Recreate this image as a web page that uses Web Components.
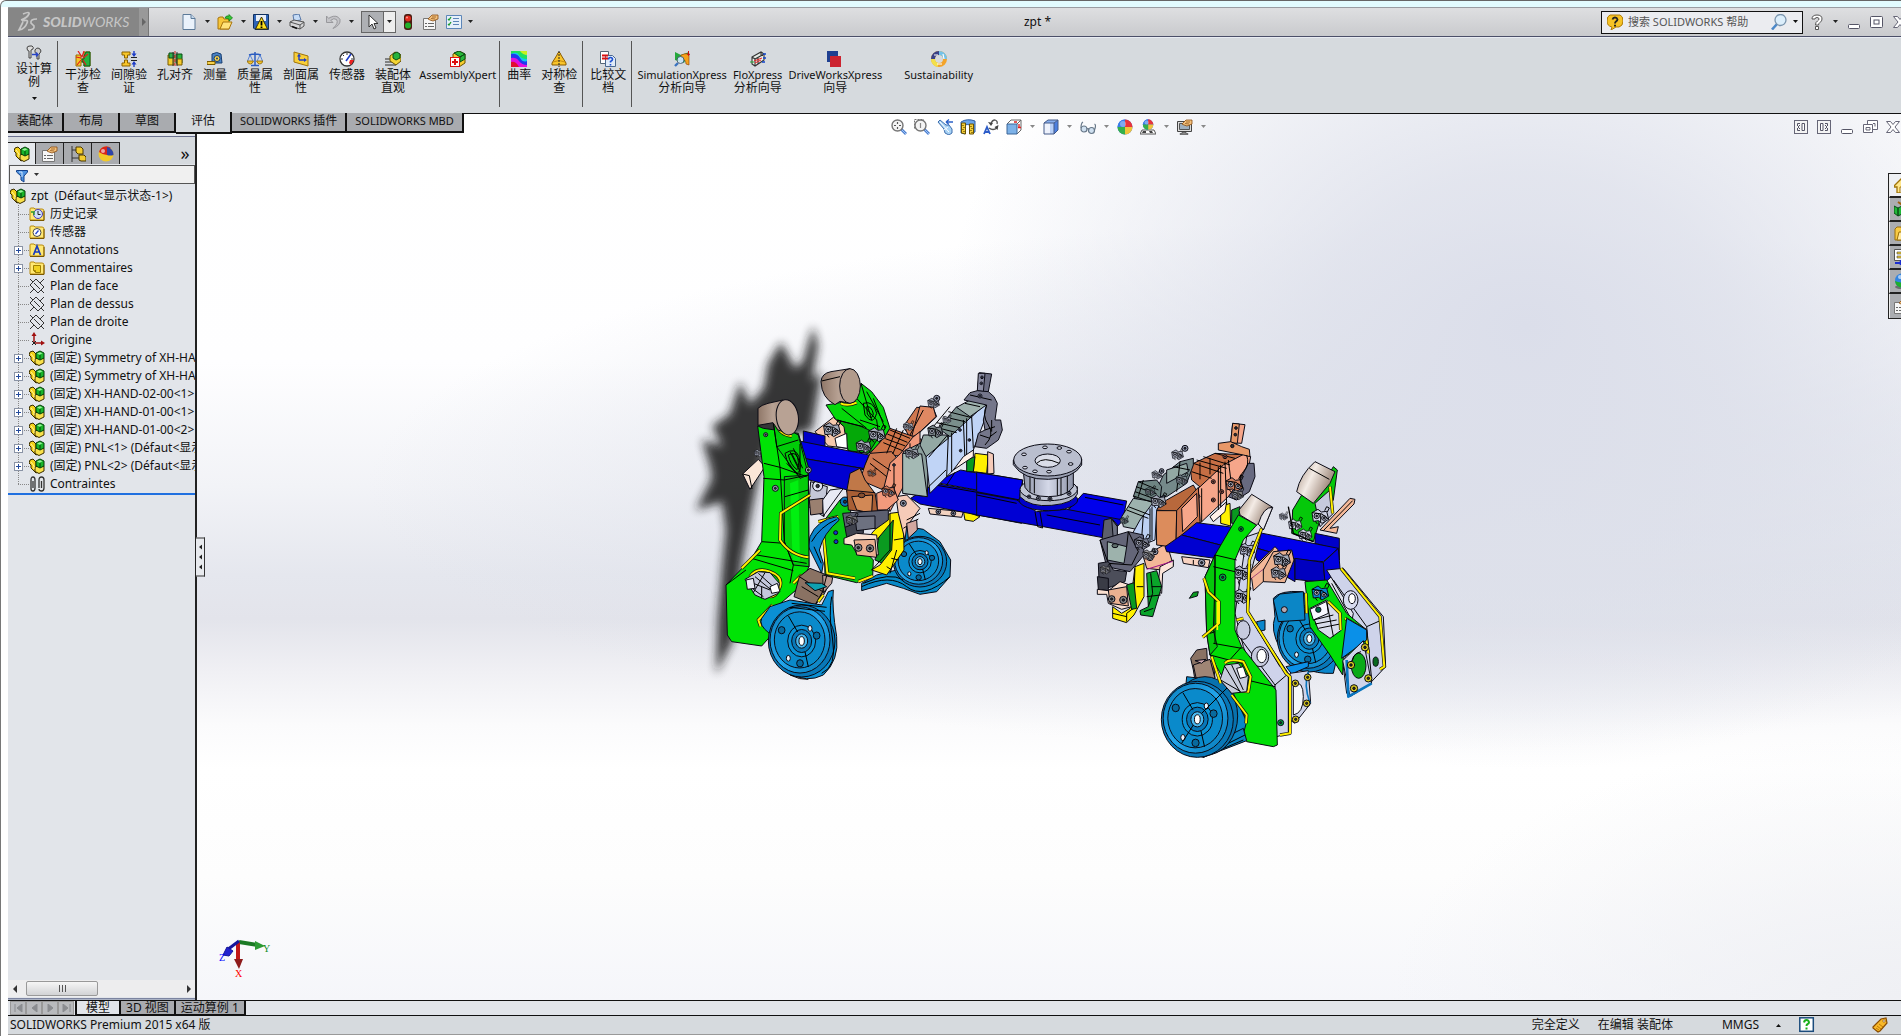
<!DOCTYPE html>
<html lang="zh-CN">
<head>
<meta charset="utf-8">
<title>zpt *</title>
<style>
  html, body { height: 100%; margin: 0; overflow: hidden; }
  body {
    font: 12px/16px "Noto Sans", "Noto Sans CJK SC", sans-serif;
    color: #111;
    background: #fff;
  }
</style>
</head>
<body>
<sw-app></sw-app>
<script>
const define = (name, css, html, setup) => {
  const tpl = document.createElement('template');
  tpl.innerHTML = `<style>
    :host,*{box-sizing:border-box}
    button{font:inherit;color:inherit;background:none;border:0;padding:0;margin:0;display:flex;align-items:center;justify-content:center}
    input{font:inherit;color:inherit;background:none;border:0;padding:0;margin:0;outline:0;min-width:0}
    .lat{font-size:11px}
    ${css}</style>${html}`;
  customElements.define(name, class extends HTMLElement {
    connectedCallback() {
      if (this.shadowRoot) return;
      this.attachShadow({ mode: 'open' }).append(tpl.content.cloneNode(true));
      if (setup) setup.call(this, this.shadowRoot);
    }
  });
};

/* ---------- icons, 16 x 16 ---------- */
const assembly = '<path d="M1 2l3-1 3 3v5l2 0v5l-2 1-5-5V7L0 5z" fill="#f4d21c" stroke="#3a2d00" stroke-width="1"/><path d="M6 9l3-1 6 0v5l-5 2.500-4-2z" fill="#f8e04a" stroke="#3a2d00" stroke-width="1"/><path d="M7 3l4-2 4 2v5l-4 2-4-2z" fill="#19b52a" stroke="#053d08"/><path d="M8 3.500l3-1.300L13.500 3.300l-3 1.500z" fill="#9cf09c"/><path d="M11 5v4.500" stroke="#053d08"/><path d="M2 4l3 4v3" stroke="#fff6a0"/>';
const folder = '<path d="M1 3q0-1 1-1h3l1 1h7q2 0 2 2v9H1z" fill="#ffe873" stroke="#b88a10"/><path d="M15 5v9.500H1" fill="none" stroke="#7a5800"/>';
const doc = '<path d="M2 .5h8l4 4v11H2z" fill="#eaf2fb" stroke="#5c7a99"/><path d="M10 .5v4h4" fill="#c5d8ec" stroke="#5c7a99"/>';
const ball = '<circle cx="8" cy="8" r="7.500" fill="#3b6fe0"/><path d="M8 8V.5a7.500 7.500 0 0 0-7.500 7.500z" fill="#3b7de8"/><path d="M8 8V.5A7.500 7.500 0 0 1 15.500 8z" fill="#e8343c"/><path d="M8 8h7.500A7.500 7.500 0 0 1 8 15.500z" fill="#f0c43c"/><path d="M8 8v7.500A7.500 7.500 0 0 1 .5 8z" fill="#35b04a"/><circle cx="6" cy="5" r="3" fill="#fff" opacity=".35"/>';
const hand = '<path d="M5 5l4-4h6v4l-5 2-3-1z" fill="#f2c07c" stroke="#8a4c10" stroke-width=".8"/><path d="M9 3l4 0M8 4.500l4 .5" stroke="#8a4c10" stroke-width=".7"/>';
const lens = '<path d="M10 10l5 5" stroke="#4d7fd0" stroke-width="2.800"/><path d="M10 10l5 5" stroke="#9cc3f5" stroke-width="1"/><circle cx="6.500" cy="6.500" r="5.500" fill="#f4f4f4" stroke="#777" stroke-width="1.400"/>';
const ICONS = {
  assembly,
  'new': doc,
  open: '<path d="M1 4l2-1h3l1 2h5v10H1z" fill="#f7c63a" stroke="#a8740c"/><path d="M3 15l3-7h9l-3 7z" fill="#ffe27a" stroke="#a8740c"/><path d="M8 4q1-3 4-2l0-1.500 3.500 3.500-3.500 3V5q-2-.5-4-1z" fill="#35c435" stroke="#0c750c" stroke-width=".7"/>',
  save: '<path d="M.5 .5h15v15H2l-1.500-1.500z" fill="#2e64b8" stroke="#10305f"/><path d="M3 1h10v6H3z" fill="#e8eef6"/><path d="M4 10h8v5H4z" fill="#a9b8cc"/><path d="M8.500 3l6 12h-12z" fill="#ffe21f" stroke="#3a3000"/><path d="M8.500 7v4.500M8.500 12.500v1.500" stroke="#000" stroke-width="1.800"/>',
  print: '<path d="M4 1l6-1 2 6-7 1z" fill="#c5dbf6" stroke="#5878a8"/><path d="M1 8l4-2 10 2v4l-4 3L1 12z" fill="#d6d6d8" stroke="#555"/><path d="M1 8l10 3 4-3M11 11v4" fill="none" stroke="#555"/><path d="M3 12.500l5 2" stroke="#111" stroke-width="1.500"/>',
  undo: '<path d="M1.500 2v6.500H8L5.800 6.300Q9 3.500 11.500 5.500 14 9 8 14.500 16 11 15 5.500 12 0 5 3.500L3.700 4.500z" fill="#c4c4c8" stroke="#98989c"/>',
  select: '<path d="M4 1v12l3-3 2 5 2-1-2-4.500h4z" fill="#fff" stroke="#333"/>',
  traffic: '<rect x="4" y="0" width="8" height="16" rx="3" fill="#4b1d12"/><circle cx="8" cy="4.500" r="3" fill="#e32b1e"/><circle cx="8" cy="11.500" r="3" fill="#22b02a"/><circle cx="7" cy="3.500" r="1" fill="#ff9c90"/>',
  props: '<path d="M.5 4.500h12v11H.5z" fill="#f6f6f6" stroke="#777"/><path d="M2 9.500h2M5 9.500h6M2 12.500h2M5 12.500h6" stroke="#666"/>' + hand,
  list: '<path d="M.5 1.500h15v13H.5z" fill="#e6f0fa" stroke="#5d86b8"/><path d="M2 5l1 1 2-3M2 10l1 1 2-3" stroke="#1b9a2c" fill="none" stroke-width="1.300"/><path d="M7 4.500h6M7 7.500h6M7 10.500h6" stroke="#5d86b8"/>',
  helpball: '<path d="M3 1h10q3 1 3 6t-4 6H9l-5 3 1-3Q0 12 0 7t3-6z" fill="#f6c325" stroke="#b07c08"/><path d="M5.500 5.500Q6 3.500 8 3.500t2.500 2q0 1-1.500 2-1 .8-1 2" fill="none" stroke="#222" stroke-width="1.800"/><path d="M8 10.800v1.800" stroke="#222" stroke-width="2"/>',
  search: '<path d="M6 10l-5 5.500" stroke="#4c88c8" stroke-width="2.600"/><circle cx="9.500" cy="6" r="5.500" fill="#dceefb" stroke="#7a94ad" stroke-width="1.300"/>',
  help: '<path d="M3 5Q3 1 8 1t5 4q0 2-2 3.500-1.500 1-1.500 2.500h-3q0-3 2-4Q10 6 10 5q0-1.500-2-1.500T6 5zM6.500 12.500h3v3h-3z" fill="#fff" stroke="#555"/>',
  min: '<rect x="2.500" y="10.500" width="11" height="4" rx="1" fill="#fff" stroke="#555566"/>',
  max: '<rect x="1.500" y="2.500" width="12" height="11" rx="1" fill="#fff" stroke="#555566"/><rect x="5" y="6" width="5" height="4" fill="#fff" stroke="#555566"/>',
  cascade: '<path d="M5.500 1.500h10v9h-10z" fill="#fff" stroke="#667"/><path d="M1.500 5.500h9v8h-9z" fill="#fff" stroke="#667"/><path d="M4 8.500h4v2.500h-4z" fill="#fff" stroke="#667"/><path d="M11 4.500h2v3" fill="none" stroke="#667"/>',
  close: '<path d="M1.500 2.500h4L8 5.500l2.500-3h4L10 8l4.500 5.500h-4L8 10.500l-2.500 3h-4L6 8z" fill="#fff" stroke="#667"/>',
  paneL: '<rect x="1.500" y="1.500" width="13" height="13" fill="#f4f4f4" stroke="#667"/><path d="M9 4.500h2.500v7H9z" fill="#fff" stroke="#556"/><path d="M7 4.500H4.500V7M7 11.500H4.500V9M7 6L5 8l2 2" stroke="#556"/>',
  paneR: '<rect x="1.500" y="1.500" width="13" height="13" fill="#f4f4f4" stroke="#667"/><path d="M4.500 4.500H7v7H4.500z" fill="#fff" stroke="#556"/><path d="M9 4.500h2.500V7M9 11.500h2.500V9M9 6l2 2-2 2" stroke="#556"/>',
  study: '<path d="M1 3q0-2 3-2h2q2 1 1 3L5 5v8H3V6Q1 6 1 3z" fill="#ddd" stroke="#444"/><path d="M9 5q1-2 3-2l2 1q2 2 0 4l-1 1v5h-2V9Q8 8 9 5z" fill="#ccc" stroke="#444"/><path d="M6 9.500h6M10 7.500l2 2-2 2" stroke="#2743c8" stroke-width="1.300"/>',
  interfere: '<path d="M1 4h5v4h3V1h6v14H9v-4H6v4H1z" fill="#f4c52a" stroke="#9a6e00"/><path d="M9 8V5l2-4h4v14H9v-4H7V8z" fill="#25b341" stroke="#0b5c1a"/><path d="M3 0l4 6M9 0L7 6M1 6l5 1M13 3L8 7M2 14l4-5M11 14L8 9" stroke="#e21c1c" stroke-width="1.200"/>',
  clearance: '<path d="M1 1h8v3H6.500v3H3.500V4H1zM1 15h8v-3H6.500V9H3.500v3H1z" fill="#f8c62a" stroke="#8a6200"/><path d="M10 6.500h6M10 9.500h6" stroke="#222"/><path d="M13 0v3M13 16v-3" stroke="#1d3cc8" stroke-width="1.400"/><path d="M10.500 2.500h5L13 6zM10.500 13.500h5L13 10z" fill="#1d3cc8"/>',
  hole: '<path d="M1 4h6v10H1z" fill="#f4cc2e" stroke="#7a5a00"/><path d="M2 2h5v5H2z" fill="#2fb04a" stroke="#0b4c16"/><path d="M9 3h6v9H9z" fill="#28b33a" stroke="#0b4c16"/><path d="M10 8h5v6h-5z" fill="#f4cc2e" stroke="#7a5a00"/><path d="M6 1v14M10 1v14" stroke="#333"/><path d="M8 0v16" stroke="#d41c1c" stroke-dasharray="3 1"/>',
  measure: '<path d="M5 3q5-3 9 0l1 9H5z" fill="#4a83c6" stroke="#173d70"/><circle cx="10" cy="7.500" r="3" fill="#f6d14a" stroke="#173d70"/><circle cx="10" cy="7.500" r="1" fill="#173d70"/><path d="M0 10.500h8v3H0z" fill="#f6d14a" stroke="#7a5a00"/>',
  mass: '<path d="M8 1v13M2 4q6-2 12 0M4 14.500h8" fill="none" stroke="#2b5cc0" stroke-width="1.500"/><path d="M3 4l-2.500 6M3 4l3 6M13 4l-3 6M13 4l2.500 6" fill="none" stroke="#3b6fd0" stroke-width=".8"/><path d="M0 10h6.500q-1 3-3.200 3T0 10zM9.500 10H16q-1 3-3.200 3T9.500 10z" fill="#f4c52a" stroke="#8a6200" stroke-width=".8"/>',
  section: '<path d="M1 1l14 4v10L1 11z" fill="#f8cf3a" stroke="#a07408"/><path d="M6 9V4M6 9h6" stroke="#1d3cc8" stroke-width="1.400"/><path d="M4 5.500h4L6 2.500zM11 7v4l3-2z" fill="#1d3cc8"/>',
  sensor: '<circle cx="8" cy="8" r="7" fill="#fff" stroke="#333" stroke-width="1.300"/><path d="M8 2v2M2 8h2M12 8h2M4 4l1 1" stroke="#333"/><path d="M7 10l5-7" stroke="#1d3cc8" stroke-width="1.600"/><path d="M11 9h4l-3 5-2-2z" fill="#e22"/>',
  visual: '<path d="M0 8h6M0 11h9M0 14h11" stroke="#666" stroke-width="1.500"/><path d="M5 5l5-4 6 3v6l-5 4-6-4z" fill="#f4d536" stroke="#6a5200"/><path d="M8 3l4-2 3 2v4l-4 2-3-2z" fill="#27b33c" stroke="#0b4c16"/>',
  xpert: '<path d="M3 3l6-3 6 3v9l-6 4-6-4z" fill="#f4cc2e" stroke="#6a5200"/><path d="M4 2l5-2 6 3-5 3zM10 6l5-3v5l-5 3z" fill="#28b83a" stroke="#0b4c16"/><rect x=".5" y="6.500" width="9" height="9" fill="#fff" stroke="#d11"/><path d="M5 8v6M2 11h6" stroke="#d11" stroke-width="2"/>',
  curvature: '<path d="M0 0h16v16H0z" fill="#10c8f0"/><path d="M0 0h10l6 5v3Q10 8 8 4T0 3z" fill="#20e060"/><path d="M9 0h7v4q-4 0-7-4z" fill="#c8f020"/><path d="M0 3q6-1 9 4t7 3v6H0z" fill="#2038f0"/><path d="M0 7q5-1 8 3t8 4v2H0z" fill="#e010e0"/><path d="M0 11q5-1 8 5H0z" fill="#e01030"/>',
  symmetry: '<path d="M8 1q1 0 2 3l5 8v2H1v-2l5-8q1-3 2-3z" fill="#f8c42a" stroke="#8a5a00"/><path d="M2 11q6-3 12 0" fill="none" stroke="#c88a10"/><path d="M8 0v16" stroke="#222" stroke-dasharray="2 1"/>',
  compare: '<path d="M.5 .5h8v12h-8z" fill="#fff" stroke="#567"/><path d="M5.500 4.500h7l3 3v8h-10z" fill="#dfeaf8" stroke="#4a6890"/><path d="M2 4.500h6M2 7.500h6" stroke="#d11" stroke-width="2"/><path d="M8.500 8.500q0-2 2-2t2 2q0 1-2 2v1M10.500 13v1.500" fill="none" stroke="#1d4fd0" stroke-width="1.600"/>',
  simulation: '<path d="M1 1l6 3 8-3v8q-3-2-5 3l-9-3z" fill="#25a83c"/><path d="M7 4q4-2 8-1v11l-3-1q0-5-5-5z" fill="#f5a21c" stroke="#8a3a00" stroke-width=".6"/><path d="M4 6l5 0 1 5-4 1z" fill="#53b3e8"/><path d="M4 12l-3 3" stroke="#3a73c0" stroke-width="2.400"/><circle cx="6.500" cy="9" r="3.500" fill="#d8ecfa" stroke="#456" opacity=".85"/><path d="M14.500 0v4M13 2.500l1.500 2 1.500-2" stroke="#c11" fill="none"/>',
  flo: '<path d="M2 6l9-5 3 2v6l-9 6-3-2z" fill="#e8eee8"/><path d="M2 6l9-5 3 2v6l-9 6-3-2zM2 6l3 2 9-5M5 8v7M8 6v7M11 1v3" stroke="#333" stroke-width="1.100"/><path d="M4 10l8-3M5 12l6-3" stroke="#e22"/><path d="M13 3h3M13 7h3M12 11h3" stroke="#14c" stroke-width="1.300"/><path d="M0 11h4" stroke="#2a3"/>',
  drive: '<path d="M0 0h11v11H0z" fill="#1f3f91"/><path d="M3 5h11v11H3z" fill="#cc2330"/>',
  sustain: '<circle cx="8" cy="8" r="6" fill="none" stroke="#f3a32a" stroke-width="4"/><path d="M2 8a6 6 0 0 1 6-6" fill="none" stroke="#3a4288" stroke-width="4"/><path d="M8 2a6 6 0 0 1 6 6" fill="none" stroke="#74c3ea" stroke-width="4"/><path d="M2 8a6 6 0 0 0 5 6" fill="none" stroke="#f3e04a" stroke-width="4"/><path d="M3 4l4 0M12 3l1 5M11 13l-5 0" stroke="#fff" stroke-width="1.200"/>',
  fit: lens + '<path d="M6.500 3v2M6.500 8v2M3 6.500h2M8 6.500h2" stroke="#555" stroke-width="1.200"/>',
  area: '<path d="M.5 .5h9v9h-9z" fill="none" stroke="#777" stroke-dasharray="2 1"/>' + lens + '<path d="M6.500 4v5" stroke="#888" stroke-width="1.200"/>',
  previous: '<path d="M1 3l2-2 6 5 3 0 3 4 0 4-3 2-4-2-1-4z" fill="#a9d3f5" stroke="#3f6fae"/><path d="M3 3l9 10M11 8l-4 3" stroke="#fff"/><path d="M9 3h7M9 3l3-2.500M9 3l3 2.500" stroke="#2c62c8" stroke-width="1.300" fill="none"/>',
  cut: '<path d="M1 3q6-4 14-1v11q-3 2-5 1V6q-3-1-5 0v9l-4-1z" fill="#6aa5ea" stroke="#2e5ca0"/><path d="M1.500 4h4v11l-4-1zM9.500 5h4v10h-4z" fill="#f4cf3a" stroke="#6a5200"/><path d="M3 6v1M4 8v1M3 10v1M4 12v1M11 7v1M12 9v1M11 11v1M12 13v1" stroke="#6a5200" stroke-width="1.300"/>',
  dynamic: '<path d="M1 15l3-7 3 7M2 13h4" fill="none" stroke="#2c5cc8" stroke-width="1.800"/><path d="M8 5q1-4 4-4 3 1 2 4M6 9q4 3 8 0" fill="none" stroke="#555" stroke-width="1.300"/><path d="M5 3l3 4 2-3zM15.500 6l-1 5-3-3z" fill="#444"/>',
  orient: '<path d="M1 5l4-4h10v10l-4 4" fill="#fff" stroke="#666"/><path d="M1 5h10v10H1z" fill="#7db2e8" stroke="#3d6798"/><path d="M11 5l4-4" stroke="#666"/><path d="M8 3h3M13 5v3M12 8.500h3" stroke="#d22" stroke-width="1.300"/>',
  cube: '<path d="M1 4l4-3h10v10l-4 4H1z" fill="#fff"/><path d="M1 4h6v11H1z" fill="#eef2fc"/><path d="M7 4h4v11H7z" fill="#b8d0f8"/><path d="M11 4l4-3v10l-4 4z" fill="#4c80e0"/><path d="M1 4l4-3h10l-4 3z" fill="#88b0f0"/><path d="M1 4l4-3h10v10l-4 4H1zM1 4h10v11M11 4l4-3" fill="none" stroke="#445a88"/>',
  glasses: '<circle cx="4" cy="10" r="3" fill="#cfe0f0" stroke="#678" stroke-width="1.200"/><circle cx="11.500" cy="11.500" r="3" fill="#cfe0f0" stroke="#678" stroke-width="1.200"/><path d="M7 10q1-1 2 .5M1 9Q1 4 3 3M14.500 11q2-5 0-6" fill="none" stroke="#678" stroke-width="1.200"/>',
  ball,
  scene: '<path d="M2 11h12l2 4H0z" fill="#fff" stroke="#555"/><path d="M3 12h3v2H2zM9 12h3l1 2h-3z" fill="#444"/><g transform="translate(2.500 0) scale(.7)">' + ball + '</g>',
  monitor: '<path d="M.5 2.500h14v10H.5z" fill="#ddd" stroke="#444"/><path d="M2.500 4.500h10v6h-10z" fill="#9fb0bf" stroke="#555"/><path d="M5 13h4v1.500h2v1H3v-1h2z" fill="#888" stroke="#444" stroke-width=".6"/>' + hand,
  config: '<path d="M2 0v16M2 4h5M2 12h7" stroke="#333"/><path d="M6 1h5l2 2v5H8L6 6z" fill="#f4cc2e" stroke="#4a3800"/><path d="M9 9h5l2 2v4h-5l-2-1z" fill="#f4cc2e" stroke="#4a3800"/>',
  display: '<circle cx="8" cy="8" r="7.500" fill="#f2c928"/><path d="M1 6A7.500 7.500 0 0 1 13 2Q9 3 9 9 5 9 1 6z" fill="#d8241c"/><path d="M9 1a7.500 7.500 0 0 1 6.500 8Q12 10 9 9z" fill="#3044a8"/><circle cx="5" cy="5" r="2" fill="#fff" opacity=".6"/>',
  filter: '<path d="M2.500 3.500h11v1.500L10 9v6l-3-2V9L2.500 5z" fill="#4d92e0" stroke="#12408c"/><path d="M5 5h3v5" fill="none" stroke="#cfe6ff"/>',
  history: folder + '<circle cx="9" cy="8" r="4.500" fill="#cfe0fb" stroke="#4a3cb8"/><path d="M9 5v3.500h2.500" fill="none" stroke="#222"/><path d="M2 6l3 0 0 3" fill="none" stroke="#2a9a2a" stroke-width="1.400"/>',
  sensors: folder + '<circle cx="8" cy="8.500" r="4" fill="#fff" stroke="#444"/><path d="M6.500 10l3-3.500" stroke="#24c" stroke-width="1.300"/>',
  annot: folder + '<path d="M4.500 13L8 4l3.500 9M6 10h4" fill="none" stroke="#1a3cc0" stroke-width="1.700"/>',
  comment: folder + '<path d="M4.500 5.500h7v7h-5l-2-2z" fill="#f0d020" stroke="#a08000"/><path d="M4.500 10.500h2v2" fill="none" stroke="#a08000"/>',
  plane: '<path d="M1 7L7 1l8 8-6 6zM1 1l3 3M12 12l3 3M5 5l6 6M1 15l4-4M11 5l4-4" fill="none" stroke="#333" stroke-width="1"/>',
  origin: '<path d="M5 11V2M5 11h8" stroke="#a01010" stroke-width="1.500"/><path d="M2.500 4L5 0l2.500 4zM12 8.500l4 2.500-4 2.500z" fill="#a01010"/><path d="M3 9l4 4M7 9l-4 4" stroke="#222"/>',
  mates: '<path d="M2 12V4q0-3 2-3t2 3v8q0 3-2 3t-2-2V6M10 12V4q0-3 2.500-3T15 4v8q0 3-2.500 3T10 13M12.500 5v7M4 5v7" fill="none" stroke="#333" stroke-width="1.300"/>',
  home: '<path d="M0 9l8-8 8 8v1h-2v6H3v-6H0z" fill="#ffe68a" stroke="#a07408" stroke-width="1.300"/><path d="M6 10h4v6H6z" fill="#fff" stroke="#a07408"/>',
  library: '<path d="M0 5l4 2v8l-4-3zM4 7l6-3v8l-6 3z" fill="#20b838" stroke="#0b4c16"/><path d="M4 1l6 4 4-3" fill="none" stroke="#a06010" stroke-width="2"/>',
  folder: '<path d="M1 4l2-2h4l1 2h7v11H1z" fill="#f8cb45" stroke="#9a6e08"/><path d="M3 15l2-8h10v8z" fill="#ffeaa0" stroke="#9a6e08"/>',
  palette: '<path d="M.5 .5h15v11H.5z" fill="#fff" stroke="#555"/><path d="M3 3h11v2H3zM3 7h11v2H3z" fill="#f4d030" stroke="#444" stroke-width=".6"/><path d="M1 14h7M6 11.500l3 2.500-3 2" stroke="#1a2ed0" stroke-width="2" fill="none"/>',
  globe: '<ellipse cx="8" cy="14" rx="7" ry="2" fill="#444" opacity=".6"/><circle cx="8" cy="7.500" r="7" fill="#3385e0"/><path d="M1 8q7 3 14 0-1 6.500-7 6.500T1 8z" fill="#1fae2c"/><circle cx="6" cy="4" r="2" fill="#fff" opacity=".6"/>',
  question: '<rect x=".8" y=".8" width="13.500" height="13.500" fill="#fff" stroke="#1b4c7c" stroke-width="1.500"/><path d="M5 5.500Q5.500 3 7.500 3t2.500 2.200q0 1.300-1.500 2-1 .6-1 1.800M7.500 10.500v2" fill="none" stroke="#1bb01b" stroke-width="2"/>',
  tag: '<path d="M1 10l8-8 5-1 1 5-7 8-2 1-5-4z" fill="#f8b828" stroke="#8a4c00" stroke-width="1.200"/><circle cx="12" cy="4" r="1.200" fill="#fff" stroke="#8a4c00" stroke-width=".7"/><path d="M5 9l4 3M7 7l4 3M4 11l3 2" stroke="#b06a00" stroke-width=".8"/>',
  caret: '<path d="M1 0h5L3.500 3z" fill="currentColor"/>'
};
customElements.define('sw-icon', class extends HTMLElement {
  connectedCallback() {
    if (this.shadowRoot) return;
    const n = this.getAttribute('name'), c = n === 'caret';
    this.attachShadow({ mode: 'open' }).innerHTML =
      `<style>:host{display:block;flex:none;width:${c ? 7 : 16}px;height:${c ? 4 : 16}px}svg{display:block}</style>
       <svg aria-hidden="true" width="${c ? 7 : 16}" height="${c ? 4 : 16}" fill="none">${ICONS[n]}</svg>`;
  }
});
const ic = n => `<sw-icon name="${n}"></sw-icon>`;
const btn = (n, label, cls = '') => `<button class="${cls}" aria-label="${label}">${ic(n)}</button>`;

/* ---------- title bar ---------- */
define('sw-titlebar', `
  :host{display:flex;flex:none;align-items:center;height:30px;border-top:1px solid #9a9da2;border-bottom:1px solid #4b4f68;background:linear-gradient(#dedfe1,#c9cacd)}
  .brand{display:flex;align-items:center;align-self:stretch;width:131px;gap:4px;padding-left:9px;background:#868686;color:#c6c6c6;font:italic 14px/20px Lato,sans-serif}
  .brand b{font-weight:900}
  .menu{align-self:stretch;width:10px;background:#999;color:#666;border-right:1px solid #777}
  .quick{display:flex;align-items:center;padding-left:32px;color:#222}
  .quick button{height:22px}
  .drop{width:20px}
  .sel{display:flex;border:1px solid #666;background:#f4f4f4;margin-right:4px}
  .sel button{width:21px;height:20px;background:#aeb0b4}
  .sel .drop{width:12px;background:#eee;border-left:1px solid #666}
  .last{display:flex;gap:7px;align-items:center}
  .last .drop{width:7px}
  .last .drop{margin-left:-2px}
  h1{flex:1;margin:0;font:inherit;text-align:center}
  .search{display:flex;align-items:center;width:202px;height:23px;padding:0 3px 0 5px;border:1px solid #111;background:#ebecf0;gap:5px}
  .search input{flex:1;font-size:11px}
  .search input::placeholder{color:#555;opacity:1}
  .win{display:flex;align-items:center;gap:7px;padding-left:6px;margin-right:-7px;color:#222}
  `,
  `<div class="brand"><svg width="22" height="22" fill="none" stroke="#c6c6c6" stroke-width="1.700" aria-hidden="true"><path d="M6 3Q13 0 12 3 10 7 4 9M5 10Q12 8 10 12 8 18 2 19L6 11M20 8Q13 8 14 12L17 15Q18 19 11 19"/></svg><span><b>SOLID</b>WORKS</span></div>
   <button class="menu" aria-label="菜单"><svg width="4" height="8"><path d="M0 0l4 4-4 4z" fill="#666"/></svg></button>
   <div class="quick">
   ${[['new', '新建'], ['open', '打开'], ['save', '保存'], ['print', '打印'], ['undo', '撤消']].map(([n, l]) => btn(n, l) + btn('caret', l + '选项', 'drop')).join('')}
   <div class="sel">${btn('select', '选择')}${btn('caret', '选择选项', 'drop')}</div>
   <div class="last">${btn('traffic', '重建模型')}${btn('props', '文件属性')}${btn('list', '选项')}${btn('caret', '更多', 'drop')}</div></div>
   <h1>zpt *</h1>
   <label class="search">${ic('helpball')}<input aria-label="搜索" placeholder="搜索 SOLIDWORKS 帮助">${btn('search', '搜索')}${btn('caret', '搜索选项')}</label>
   <div class="win">${btn('help', '帮助')}${btn('caret', '帮助选项')}${btn('min', '最小化')}${btn('max', '还原')}${btn('close', '关闭')}</div>`);

/* ---------- ribbon ---------- */
define('sw-ribbon-button', `
  :host{display:block}
  button{flex-direction:column;justify-content:flex-start;padding:0 5px;line-height:13px;text-align:center}
  :host([latin]) button{padding:0 3px}
  .t{margin-top:1px}`,
  `<button><slot name="icon"></slot><span class="t"><slot></slot></span><slot name="drop"></slot></button>`);
define('sw-ribbon', `
  :host{display:flex;flex:none;position:relative;height:77px;background:#d6dade;border-top:1px solid #e8ebf2;border-bottom:1px solid #111;padding-top:3px}
  .group{display:flex;padding:10px 0 0 2px;height:66px;border-right:1px solid #555}
  .first{padding:4px 0 0 3px;width:50px}
  .last{border:0}
  .last sw-ribbon-button:last-child{margin-left:16px}
  .drop{margin-top:9px}
  `, '', function (root) {
  const g = [
    ['first', [['study', '设计算<br>例']]],
    ['', [['interfere', '干涉检<br>查'], ['clearance', '间隙验<br>证'], ['hole', '孔对齐'], ['measure', '测量'], ['mass', '质量属<br>性'], ['section', '剖面属<br>性'], ['sensor', '传感器'], ['visual', '装配体<br>直观'], ['xpert', '<span class="lat">AssemblyXpert</span>']]],
    ['', [['curvature', '曲率'], ['symmetry', '对称检<br>查']]],
    ['', [['compare', '比较文<br>档']]],
    ['last', [['simulation', '<span class="lat">SimulationXpress</span><br>分析向导'], ['flo', '<span class="lat">FloXpress</span><br>分析向导'], ['drive', '<span class="lat">DriveWorksXpress</span><br>向导'], ['sustain', '<span class="lat">Sustainability</span>']]]];
  root.innerHTML += g.map(([c, items]) => `<div class="group ${c}">${items.map(([n, t]) =>
    `<sw-ribbon-button ${t.includes('lat') ? 'latin' : ''}><sw-icon slot="icon" name="${n}"></sw-icon>${t}${c === 'first' ? '<sw-icon class="drop" slot="drop" name="caret"></sw-icon>' : ''}</sw-ribbon-button>`).join('')}</div>`).join('') + '<sw-tabs></sw-tabs>';
});
define('sw-tabs', `
  :host{display:flex;position:absolute;left:0;top:100%;z-index:2;align-items:flex-start}
  button{height:20px;min-width:56px;padding:0 8px 2px;background:#a9abaf;border:solid #111;border-width:0 2px 2px 0}
  .lat{white-space:pre}
  .on{background:#d6dade;height:22px;margin-top:-1px}`,
  `<button>装配体</button><button>布局</button><button>草图</button><button class="on">评估</button><button><span class="lat">SOLIDWORKS </span>插件</button><button><span class="lat">SOLIDWORKS MBD</span></button>`);

/* ---------- feature tree ---------- */
define('sw-tree-item', `
  :host{display:flex;align-items:center;height:18px;white-space:nowrap}
  .stem{flex:none;width:21px;height:18px;display:flex;align-items:center;padding-left:6px;background:repeating-linear-gradient(#888 0 1px,#0000 1px 2px) 10px 0/1px 100% no-repeat,repeating-linear-gradient(90deg,#888 0 1px,#0000 1px 2px) 10px 9px/11px 1px no-repeat}
  :host([end]) .stem{background-size:1px 9px,11px 1px}
  .stem button{display:none;width:9px;height:9px;background:#fff;border:1px solid #8a93a5}
  :host([more]) .stem button{display:flex}
  :host([root]) .stem{width:2px;padding:0;background:none}
  .t{padding-left:5px}`,
  `<span class="stem"><button aria-label="展开"><svg width="5" height="5"><path d="M2.500 0v5M0 2.500h5" stroke="#234a9c"/></svg></button></span><slot name="icon"></slot><span class="t"><slot></slot></span>`,
  function () { this.setAttribute('role', 'treeitem'); });
define('sw-panel', `
  :host{position:relative;display:flex;flex-direction:column;flex:none;width:189px;padding-top:22px;background:#e2e5ea;border-right:2px solid #222}
  .tabs{display:flex;align-items:flex-end;background:#d6dade;border-top:1px solid #6b7190;padding-top:5px}
  .tabs button{width:28px;height:22px;background:#a9abaf;border:solid #222;border-width:1px 1px 0 0}
  .tabs .on{background:#e6e9ed;border-color:#222}
  .tabs .more{margin-left:auto;width:20px;background:none;border:0;font-size:18px}
  .filter{display:flex;align-items:center;gap:3px;height:19px;margin:1px 0 3px 1px;padding-left:4px;border:1px solid #555;background:#f0f0f0;color:#333}
  .filter input{flex:1}
  .tree{overflow:hidden;border-bottom:2px solid #2070e0}
  .fill{flex:1}
  .scroll{display:flex;height:17px;align-items:center;background:#ededee;padding:0 3px 0 4px;margin-bottom:1px;gap:9px}
  .scroll button:nth-child(2){width:72px;height:15px;border:1px solid #999;border-radius:2px;background:linear-gradient(#f6f6f6,#d2d3d5)}
  .scroll button:last-child{margin-left:auto}
  .base{height:2px;border-top:1px solid #7c84a0;background:#aab2c4}
  .grip{position:absolute;right:-10px;top:50%;width:9px;height:39px;transform:translateY(-50%);background:#e8eaee;border:1px solid #333;border-left:0;z-index:1}
  `,
  `<div class="tabs">${btn('assembly', '特征树', 'on')}${btn('props', '属性')}${btn('config', '配置')}${btn('display', '外观')}<button class="more" aria-label="更多">»</button></div>
   <label class="filter">${ic('filter')}${ic('caret')}<input aria-label="过滤"></label>
   <div class="tree" role="tree"></div><div class="fill"></div>
   <div class="scroll"><button aria-label="向左"><svg width="5" height="8"><path d="M5 0v8L1 4z" fill="#333"/></svg></button><button aria-label="滚动条"><svg width="9" height="7"><path d="M1.500 0v7M4.500 0v7M7.500 0v7" stroke="#555"/></svg></button><button aria-label="向右"><svg width="5" height="8"><path d="M0 0v8L4 4z" fill="#333"/></svg></button></div>
   <div class="base"></div>
   <button class="grip" aria-label="折叠"><svg width="4" height="25"><path d="M4 0v5L1 2.500zM4 10v5l-3-2.500zM4 20v5l-3-2.500z" fill="#222"/></svg></button>`,
  function (root) {
    const rows = [['assembly', 'zpt&nbsp; (Défaut&lt;显示状态-1&gt;)', 'root'], ['history', '历史记录', ''], ['sensors', '传感器', ''], ['annot', 'Annotations', 'more'], ['comment', 'Commentaires', 'more'],
      ['plane', 'Plan de face', ''], ['plane', 'Plan de dessus', ''], ['plane', 'Plan de droite', ''], ['origin', 'Origine', ''],
      ...['Symmetry of XH-HAND', 'Symmetry of XH-HAND', 'XH-HAND-02-00&lt;1&gt;', 'XH-HAND-01-00&lt;1&gt;', 'XH-HAND-01-00&lt;2&gt;', 'PNL&lt;1&gt; (Défaut&lt;显示', 'PNL&lt;2&gt; (Défaut&lt;显示'].map(t => ['assembly', '(固定) ' + t, 'more']),
      ['mates', 'Contraintes', 'end']];
    root.querySelector('.tree').innerHTML = rows.map(([n, t, a]) => `<sw-tree-item ${a}><sw-icon slot="icon" name="${n}"></sw-icon>${t}</sw-tree-item>`).join('');
  });

/* ---------- 3D model ---------- */
const p = (fill, pts, extra = '') => `<polygon fill="${fill}" points="${pts}" ${extra}/>`;
const d = (path, extra = '') => `<path d="${path}" ${extra}/>`;
const e = (fill, x, y, rx, ry = rx, extra = '') => `<ellipse fill="${fill}" cx="${x}" cy="${y}" rx="${rx}" ry="${ry}" ${extra}/>`;
const line = (path, c = '#000', w = 3) => `<path d="${path}" fill="none" stroke="${c}" stroke-width="${w}"/>`;
const yl = path => line(path, '#111', 10) + line(path, '#fff000', 6);
const bolt = (x, y, r = 9, c = '#9aa2b4') => e(c, x, y, r) + e('#333', x, y, r / 3);
const cluster = (x, y, s, c = '#a4aab8') => `<g transform="translate(${x} ${y}) scale(${s})">` +
  p(c, '-24,-12 -6,-22 4,-14 20,-16 26,8 6,20 -4,12 -20,14') + bolt(-10, -2, 8, '#c4c8d4') + bolt(12, 4, 7, '#c4c8d4') + line('M-24 -12L6 -8L26 8M2 -8V18M-14 14l6 8M14 -18l6 -12l8 4l-6 12') + '</g>';
const wheel = (x, y, rx, ry) => e('#0878b8', x, y, rx, ry) + e('url(#disc)', x - rx * .05, y - ry * .03, rx * .9, ry * .92) + e('#0a8acb', x - rx * .06, y - ry * .03, rx * .76, ry * .78) +
  e('#0b93d6', x, y, rx * .42, ry * .44) + e('#0878b8', x, y, rx * .3, ry * .32) + e('#4ab8ee', x, y, rx * .18, ry * .2) + e('#fff', x, y, rx * .08, ry * .12) +
  line(`M${x - rx * .4} ${y - ry * .7}L${x - rx * .12} ${y - ry * .25}M${x + rx * .2} ${y + ry * .72}L${x + rx * .1} ${y + ry * .3}`) +
  [[-.6, -.3], [.45, -.15], [-.05, .62]].map(([a, b]) => e('#086a9e', x + a * rx, y + b * ry, rx * .1, ry * .1)).join('') +
  [[.25, -.35], [-.4, .48]].map(([a, b]) => e('#e8f4ff', x + a * rx, y + b * ry, rx * .06, ry * .08)).join('');

const left =
  /* rear arm and tube */
  p('#05d80a', '408,255 450,248 500,235 513,190 545,215 580,262 600,325 570,375 535,400 475,392 458,330') +
  p('#04a808', '440,300 510,318 570,345 535,400 475,392 458,330') +
  line('M455 265L530 325M500 235L560 300L570 375M513 190L545 300M520 250q30 -10 40 30q-10 40 -35 5zM530 260q15 -2 20 22q-5 22 -18 0zM440 300L520 320M530 215l50 90M550 235l35 90M510 300l60 20') +
  yl('M452 250q20 10 48 -2') +
  d('M393 185q2 -25 30 -30l57 -9l20 90l-20 14l-30 -6l-15 10q-40 -20 -42 -69z', 'fill="url(#tube)"') + e('#b29b8c', 480, 198, 31, 52) + line('M395 183L450 170') +
  p('#f6c9ac', '375,335 430,292 462,320 472,385 415,378') + cluster(425, 330, 1) + p('#fff', '435,355 470,340 472,385 440,380') +
  /* green panel behind, rear wheel */
  p('#0788c6', '590,640 640,618 700,628 750,665 782,720 780,770 740,815 690,823 640,805 590,790 515,812 515,790 560,765 640,745') +
  wheel(690, 725, 80, 76) + line('M515 800Q600 760 650 800T780 770M520 790Q600 755 640 780') +
  p('#09c810', '400,605 450,540 480,528 485,650 550,720 548,770 500,788 405,765') +
  yl('M385 605L445 590M400 640L412 760L495 775M505 785L548 768') +
  d('M360 650Q380 600 440 590l8 10Q400 640 388 690l12 40l-5 30q-20 -40 -40 -80z', 'fill="#0a86cc"') + line('M365 665Q390 620 440 598M372 680l22 50') +
  e('#1730d0', 437, 638, 6) + e('#1730d0', 438, 665, 6) + bolt(465, 545, 14, '#0878b8') +
  p('#c4c8d8', '362,485 412,500 402,590 356,560') + bolt(383, 498, 15, '#dfe3f0') + p('#9a8070', '358,540 400,535 398,580 362,585') + p('#e8eaf4', '398,540 420,510 460,505 400,588') +
  /* blue beam */
  p('#0000c8', '340,333 405,348 405,382 340,368') + p('#0000e8', '328,363 537,405 522,446 345,416') + p('#0000d0', '345,416 522,446 480,470 480,512 350,478') +
  p('#f3d3c0', '715,565 820,575 815,592 720,582') + p('#fff000', '820,572 870,590 850,604 825,600') + bolt(745, 575, 7) + bolt(790, 580, 7) +
  p('#0000ec', '735,487 812,450 995,484 995,535') + p('#0000d8', '662,535 735,490 995,535 995,610 690,552') + line('M735 495L995 540M770 495l25 -38') +
  /* yellow and green foot */
  p('#0a9a20', '575,600 625,590 620,690 590,735 555,720') +
  d('M545 640L600 580L640 575L642 690L590 765L545 750L570 735L605 690L610 600L560 660z', 'fill="#fff000"') + line('M600 580V690L545 750M620 690L600 760M612 660L640 655M604 715l22 5M590 740l15 10') +
  p('#f6cbb8', '618,530 650,525 690,565 650,620 645,660 625,580') + bolt(640, 550, 9) + line('M650 600l40 -20M640 625l45 -28') + p('#d2a8a0', '650,610 680,600 682,630 655,655') +
  p('#fff000', '855,400 895,405 890,460 850,455') + p('#f6cbb8', '893,395 910,402 912,460 893,462') + p('#0a9a20', '830,420 855,410 850,455 830,455') +
  /* orange clamp */
  p('#d07850', '640,320 680,262 730,265 740,290 665,360') + p('#e08862', '690,258 730,262 738,290 680,345 665,350') +
  p('#cf7448', '585,350 600,325 700,360 650,410 540,400') +
  p('#cc7850', '525,435 540,400 605,395 625,420 580,510 510,480') +
  p('#f29a7c', '580,510 600,430 632,400 668,352 690,335 690,400 640,500 600,575') +
  line('M600 330l60 25M592 342l60 25M586 356l60 22M580 368l60 25M620 325l-30 75M640 330l-32 72M540 430l50 40M548 415l55 38M700 270l-40 75M612 440v100M660 370v50') +
  cluster(545, 460, .5, '#b4683f') + p('#c07848', '480,460 510,445 525,480 555,520 470,515') + p('#a85e34', '470,510 555,518 565,580 475,570') +
  p('#d28855', '485,530 548,525 545,580 500,570') + e('#885030', 515, 526, 10, 7) +
  p('#f29a7c', '560,520 610,500 625,540 590,570 562,570') + cluster(595, 515, .8, '#d07858') +
  /* dark gripper head */
  p('#5c5f70', '458,580 520,575 595,570 595,600 560,625 465,622') + p('#3f424e', '465,622 520,600 520,640 470,650') + p('#6d7180', '495,590 555,588 555,625 500,632') + cluster(485, 600, .7, '#777') +
  p('#fbe0d0', '462,655 500,640 560,645 565,705 500,700 485,675 462,672') + p('#eab090', '492,660 555,658 560,712 500,705') + bolt(505, 683, 11, '#888') + bolt(540, 685, 11, '#888') +
  /* grey clamp */
  p('#8c9f9c', '640,395 690,370 715,410 712,530 640,520') + p('#a4b9b4', '638,400 695,402 712,530 638,520') +
  p('#c0d4f6', '708,410 775,345 845,290 890,250 893,275 850,390 800,440 720,520') +
  p('#93a8a4', '690,375 700,345 770,345 775,355 708,410') + p('#7a8f8c', '745,325 800,260 850,285 780,350') + p('#9fb2ae', '800,262 840,240 893,252 840,290') +
  line('M775 345l-5 125M785 338v118M820 300l5 120M830 295v115M845 290l5 95M716 412l55 -65M716 500l52 -50M730 320l70 18M740 308l70 15M760 290l65 15M775 275l70 18M780 260l-50 60M825 250l45 10') +
  cluster(735, 335, .9, '#7a8588') + cluster(665, 400, .8, '#9a9faa') + cluster(560, 345, 1) + cluster(520, 380, .9) + cluster(655, 320, .6) + cluster(730, 250, .7) + bolt(740, 235, 9) + cluster(770, 300, .5) +
  bolt(810, 330, 4) + bolt(812, 392, 4) + bolt(838, 360, 4) + bolt(612, 435, 4) +
  p('#fff0e8', '820,410 850,390 850,410 790,450') +
  /* dark rocker on the right */
  p('#6b6d82', '868,158 905,162 895,215 862,215') + p('#8a8ca2', '865,160 885,160 880,215 862,212') +
  p('#74768a', '822,240 840,218 862,212 895,215 912,230 922,250 915,300 932,300 937,330 925,360 890,385 855,380 865,340 885,330 880,300 890,255') +
  line('M840 225L905 240M885 330L915 320M890 255q-15 30 5 60t-10 60M900 350l20 -15M905 300v35M870 345l30 10') + bolt(876, 172, 4) + bolt(874, 190, 4) + bolt(870, 228, 6) +
  /* left big arm */
  p('#fbe6d8', '158,462 205,418 225,440 180,508') + line('M158 462l20 5l8 40') + cluster(205, 400, .5) +
  d('M220 325L203 318L222 470L215 665L185 715L108 795L112 945L125 965L215 978L240 950L260 860L330 800L357 740L355 440L325 340z', 'fill="#00e305"') +
  p('#04cc0a', '283,470 355,465 357,740 310,735 283,665') + p('#00f010', '300,490 325,480 330,730 308,725', 'stroke="none"') +
  p('#00cc08', '325,345 250,305 260,380 330,475 355,465') +
  line('M222 430L270 442L283 665L310 735L300 790M220 475L283 480L355 465M215 665L283 670M200 705L350 730M185 715L310 752M250 310L270 442L350 470M260 380L325 360M285 400q30 -20 42 10q10 40 -5 50q-30 -20 -37 -60zM295 405q20 -12 28 8q6 30 -2 36q-20 -14 -26 -44zM285 530L355 510M108 795l60 -45') +
  line('M300 395l30 60M310 385l28 60M330 372v100M290 430l40 40M305 400l20 40') +
  yl('M360 525L272 580L270 660Q300 705 355 712') + yl('M258 310Q268 345 305 348') + yl('M155 745L210 690') + yl('M248 855L205 900L212 920') + yl('M310 790L335 765') +
  d('M204 265q10 -10 30 -15l45 -10l15 100l-30 -10l-15 -22l-45 8z', 'fill="url(#tube)"') + e('#b8a294', 292, 292, 33, 53, 'transform="rotate(-8 292 292)"') +
  bolt(227, 344, 6) + bolt(256, 505, 9) + bolt(355, 450, 9) +
  yl('M180 770Q200 740 240 755T270 800T240 830') + p('#c4c8dc', '165,778 205,755 240,758 268,790 265,820 225,838 195,825') + line('M190 790l50 20M205 760l50 45M180 800l40 30M215 800v35M195 770l55 45M225 758l-35 60') + p('#e8eaf4', '168,780 190,775 195,805 172,808') + p('#fff', '240,800 262,790 270,815 245,820') +
  /* brown block and front wheel */
  p('#8a7263', '328,770 360,745 410,765 425,780 398,830 375,855 312,830') + p('#b89a90', '398,765 428,772 425,790 400,818') + line('M328 770l70 45l12 -48M398 815l-23 40M335 800l50 30') + p('#0ea0b0', '345,788 395,790 410,800 375,812') +
  d('M240 860L300 840L395 855L415 815L430 810Q425 860 440 950Q448 1020 400 1065Q350 1090 300 1060Q250 1025 238 940Q205 915 215 895z', 'fill="#0a90d4"') +
  wheel(335, 963, 100, 108) + line('M425 830Q415 880 428 960T395 1060M305 850L410 862M300 862L405 874M355 1078Q330 1080 300 1065') + yl('M385 845L400 825');

const right =
  /* beam */
  p('#0000ec', '-10,217 128,240 125,290 430,345 430,305 315,282 262,330 360,362 360,350') +
  p('#0000ec', '-10,217 128,240 120,285 120,300 -10,275') + p('#0000ec', '265,330 310,280 440,303 430,352 420,362') +
  p('#0000d4', '-10,278 110,300 170,335 260,328 430,360 380,415 190,380 -10,345') + line('M-10 285L110 310M200 345L360 375M315 292L430 315M165 335l8 45l15 4l-8 -48') +
  e('#0000c8', 205, 300, 88, 32) +
  /* centre flange */
  d('M120 270v20Q150 322 215 316T292 282v-22z', 'fill="#aeb4c4"') + e('#c0c5d4', 206, 268, 86, 34) + d('M130 215h150v45Q260 290 205 290T135 262z', 'fill="url(#cyl)"') +
  line('M150 225v50M163 228v52M232 225v62M243 225v62M262 220v55') + bolt(175, 295, 6) + bolt(210, 297, 6) + bolt(267, 280, 6) + bolt(147, 290, 5) +
  d('M100 180v14Q130 240 205 238T305 195v-18z', 'fill="#9aa0b2"') + e('#b9bece', 203, 180, 102, 48) + e('#dadde8', 203, 182, 38, 20) + line('M170 190Q190 168 238 190') +
  [[195, 142], [238, 144], [267, 155], [272, 192], [207, 215], [165, 214], [132, 163], [135, 203]].map(([x, y]) => e('#dadde8', x, y, 7, 4)).join('') +
  /* rear right arm */
  p('#05c80a', '965,285 1000,300 1060,200 1072,210 1060,300 1020,360 1000,425 935,400 938,330') +
  d('M1005 185L1065 215L1050 250L1000 310L950 275Q960 225 1005 185z', 'fill="url(#tubeHi)"') + line('M988 205L1048 238') +
  p('#c6cadc', '1005,310 1050,270 1060,340 1020,380') + yl('M1050 260L1058 340') + cluster(1020, 350, 1, '#cfd3e4') + cluster(945, 375, .8, '#cfd3e4') + cluster(975, 405, .8, '#cfd3e4') + cluster(910, 350, .5) + line('M925 320l15 80l60 25', '#000', 4) +
  p('#f4b898', '1020,390 1110,295 1125,298 1122,312 1050,385 1075,380 1070,400') + line('M1030 392L1118 302') +
  p('#0000c8', '1005,400 1078,415 1078,480 1060,445 1005,430') +
  /* grippers under beam */
  p('#f4b898', '490,470 560,430 580,495 545,510 500,505') + bolt(525, 455, 9) + bolt(510, 472, 10) + p('#fbe4d8', '540,500 580,480 580,500 548,520 545,580 532,575') + line('M500 508L578 484', '#a0108a') +
  p('#f8d2c0', '605,470 690,480 685,503 610,490') + bolt(665, 488, 10) + line('M640 480v14') +
  d('M500 520L530 512L545 560L518 650L482 645L480 632L505 620z', 'fill="#0aa52a"') + line('M505 620L518 580L512 520M500 590l42 -5M492 635l28 -10M545 560h-30') +
  d('M465 500L492 490V590L462 645L440 668L398 655V620L425 640L450 625z', 'fill="#fff000"') + line('M465 505L460 625L440 640V665M398 640L440 650M470 560h20') +
  p('#fff000', '722,320 750,310 752,378 722,370') + p('#fff0e8', '690,350 740,305 735,335 700,365') + p('#0a9a20', '755,330 780,320 775,370 755,370') +
  /* orange right clamp */
  p('#c66e44', '630,195 705,160 800,165 735,215 665,265 635,240') + p('#f6a68a', '655,265 730,195 800,158 812,170 800,235 745,290 660,370') +
  line('M640 190l90 30M650 180l90 25M670 170l80 25M635 215l60 20M660 188v50M690 175v48M705 160l60 15M715 200v130M722 195v125M735 185l5 130M665 265v100M745 180l10 80') +
  bolt(700, 245, 6, '#d07050') + bolt(700, 300, 6, '#d07050') + bolt(725, 275, 6, '#d07050') + bolt(735, 170, 6, '#d07050') +
  p('#f6a68a', '758,70 795,74 785,130 752,128') + p('#e89868', '758,70 778,72 772,130 752,128') + p('#e89868', '715,130 752,125 785,140 808,148 810,170 790,165 715,150') + e('#333', 768, 84, 4) + e('#333', 766, 104, 4) + e('#333', 757, 138, 5) +
  p('#686a80', '805,190 822,190 825,230 808,275 770,300 745,290 780,240') + cluster(762, 255, 1, '#d08060') + cluster(772, 285, .7, '#888') + line('M800 165q10 30 -10 50t0 50') +
  p('#b8683c', '528,330 560,300 640,255 660,290 600,350 590,335') + p('#dc8c5c', '528,332 590,332 588,442 530,435') + p('#c8744c', '590,332 655,262 660,365 605,425 588,442') + p('#f6a68a', '605,325 650,280 652,350 608,395') +
  /* grey left clamp */
  p('#75898a', '550,225 600,185 640,175 640,195 620,250 560,290 520,290') + p('#93a8a4', '560,210 620,190 625,215 560,250') +
  p('#6e8482', '460,290 475,245 530,240 545,260 540,300 525,330') + p('#9db2ae', '425,350 460,295 520,305 525,340 480,390 430,380') +
  p('#bcd0f2', '455,405 480,360 525,300 555,285 530,330 525,420 500,430 480,410') +
  line('M475 245l60 25M468 260l62 22M465 275l60 22M460 288l60 20M445 320l65 25M440 330l65 25M490 345l-5 70M510 325v100M516 320v100M490 240l-15 50M580 200l50 10M600 185l-10 90') +
  cluster(592, 165, .7) + bolt(615, 145, 9) + cluster(530, 225, .6) + bolt(545, 213, 7) + cluster(535, 305, .9) + cluster(605, 240, .7, '#76858a') + cluster(432, 362, .5, '#5e7472') + cluster(510, 275, .6, '#5e7472') +
  p('#5d606c', '372,360 395,355 412,375 410,425 365,430') + p('#6d7180', '395,357 412,380 412,425 400,420') +
  p('#646678', '360,420 445,395 490,405 492,465 450,515 380,500') + p('#9db2ac', '382,425 440,440 432,490 382,480') + line('M360 420l25 70l70 5l20 -40l-30 -60M445 395l-5 45') + e('#60706c', 405, 437, 9, 6) +
  cluster(485, 430, .9, '#767a8c') + cluster(505, 465, .7, '#999') +
  p('#4c4e5a', '355,490 385,485 400,510 440,515 435,545 395,560 358,570') + p('#3a3c46', '352,530 385,535 385,572 355,568') + cluster(375, 510, .6, '#888') +
  p('#fbe0d0', '352,568 385,572 420,545 450,555 455,620 425,628 385,610 380,583 352,583') + p('#eab090', '385,570 440,560 445,618 390,610') + bolt(395, 597, 10, '#888') + bolt(430, 600, 11, '#888') + p('#0a9a20', '440,555 462,548 470,625 455,628') +
  p('#0a9a20', '628,595 640,577 655,575 652,588') +
  /* beam right part */
  p('#0000ec', '650,368 760,382 790,440 740,440 605,405') + p('#0000d0', '555,440 605,405 740,440 705,475 560,455') +
  p('#0000ec', '838,398 1075,445 1030,485 945,478 815,440') + p('#0000d8', '815,440 945,478 945,545 830,480') + p('#0000c0', '945,475 1030,487 1035,548 945,538') + p('#0000e0', '1030,487 1075,445 1080,505 1035,548') +
  p('#f4b898', '775,545 885,440 895,450 860,500 855,540 820,572 815,535 780,560') + line('M780 552L880 448') + line('M795 550l65 -50', '#7a1060', 2) + p('#e8b090', '880,455 935,450 942,480 915,548 850,545 850,510') + cluster(905, 480, 1) + cluster(895, 520, .9) +
  /* far right wheel and leg */
  d('M880 595Q900 570 965 575L1030 610L1090 690L1060 820Q960 825 900 745Q870 690 885 650z', 'fill="#0a86cc"') + wheel(988, 716, 96, 100) + p('#0b86c6', '880,600 900,582 970,575 975,660 895,665') + e('#b8a8b0', 913, 629, 9) +
  p('#ced3ea', '1040,510 1090,505 1210,650 1217,800 1170,850 1100,880 1090,800 1120,640') + line('M1060 540L1160 680L1205 660M1160 680L1175 840M1055 550l60 110') + e('#d8dcf0', 1112, 600, 22, 28) + e('#fff', 1116, 596, 10, 15) +
  p('#00dc08', '975,545 1040,540 1100,640 1160,690 1165,740 1090,770 1088,825 1050,765 990,680') +
  yl('M1083 505L1200 650L1213 800L1200 808') + yl('M1095 655L1155 690L1165 760') + yl('M978 580L980 640') +
  p('#d8dcea', '990,625 1040,600 1080,640 1085,690 1050,715 1015,690') + p('#f8f8ff', '990,628 1040,604 1045,640 1000,660') + line('M1000 660L1060 645M1005 672L1070 660M1015 685L1080 672M1040 604l20 105') + yl('M1045 605L1080 640L1082 690') + cluster(1020, 580, 1, '#0a86d0') + e('#064', 1015, 629, 8) +
  p('#0a90e8', '1100,655 1160,690 1160,720 1085,775') + p('#cfd4ea', '1088,782 1150,722 1175,850 1110,890') + e('#0aaa18', 1136, 797, 22, 38) + line('M1115 800q0 -40 28 -45') + line('M1100 780L1105 890L1175 850', '#0a76c0', 8) +
  [[1113, 795], [1155, 742], [1165, 835], [1122, 865]].map(([x, y]) => bolt(x, y, 11, '#d8c820')).join('') + e('#0a6a20', 1187, 785, 8, 14) +
  /* near right leg */
  p('#ced3ea', '800,410 845,395 812,520 805,640 925,820 925,1000 890,1010 790,740 765,640') + line('M770 700L885 855L920 825M885 855L890 1000M815 660L900 800') + cluster(785, 520, 1, '#b0b6cc') + cluster(785, 590, 1, '#b0b6cc') + cluster(800, 450, .9, '#b0b6cc') +
  e('#c6cade', 790, 690, 20, 28) + e('#c6cade', 840, 770, 26, 30) + e('#fff', 845, 768, 14, 20) +
  p('#0a90e8', '918,800 985,785 985,800 935,822') + p('#cfd4ea', '930,820 985,812 992,910 945,970 930,960') + d('M940 850Q970 840 970 890T940 945z', 'fill="#f6f7fb"') + line('M985 815q-15 40 5 95', '#0a76c0', 5) +
  [[946, 850], [983, 832], [980, 910], [947, 958]].map(([x, y]) => bolt(x, y, 10, '#d8c820')).join('') +
  p('#0a86cc', '830,665 855,660 855,690 835,695') +
  d('M775 345L830 375L790 420L765 480L765 690L785 740L888 870L892 1035L880 1040L800 1025L780 985L800 960L690 765L680 700L675 530L705 465z', 'fill="#00de06"') +
  p('#05c80a', '705,465 675,530 680,700 690,765 712,740 700,690 705,540') +
  line('M705 465L770 480M700 500L765 515M705 465V730M700 730L785 745M690 765L785 790L800 840L885 860M785 740L740 790M690 700L705 695') +
  yl('M845 385L808 480L803 635L918 820L930 830L930 1000L900 1005') + yl('M672 535L685 575L717 605V670L668 712') + yl('M770 660L790 655') + line('M712 605v85', '#fff000', 5) + bolt(728, 532, 10, '#0a4') + bolt(783, 387, 7, '#0a4') + bolt(902, 968, 9, '#0a4') +
  d('M777 330L815 283L878 322L850 390Q835 365 830 375L780 345z', 'fill="url(#tubeHi)"') + d('M878 322Q850 320 835 372L850 390z', 'fill="#e8e6ea"') +
  /* near right block and wheel */
  p('#8a7263', '632,775 650,750 680,745 682,780 700,785 705,835 645,842 640,810') + p('#a08575', '640,795 690,778 705,835 650,842') + p('#d0a8b0', '645,782 678,778 665,790') +
  d('M620 830L700 840L760 880L800 965L785 1020L670 1072L600 1050Z', 'fill="#0a88c8"') + d('M670 1072L800 1022L790 985L740 1010z', 'fill="#0a84c4"') + line('M720 1050L790 1020M735 1035L795 1005M690 850L760 900') + e('#0872ae', 675, 948, 98, 118) + wheel(652, 958, 108, 114) + line('M605 1030L640 975M665 940L760 845') +
  yl('M755 885L800 945L798 970') + yl('M735 790Q745 775 790 785L812 830L805 875L780 872') + p('#c8ccdc', '720,840 735,795 775,790 805,830 800,875 755,880') + line('M735 800l45 75M755 795l35 75M722 840l60 35') + p('#fff', '770,805 790,800 800,830 780,835') + yl('M695 770L722 850');

define('sw-model', `:host{display:block;flex:1;min-height:0;overflow:hidden}svg{display:block;width:100%;height:100%;overflow:visible}text{font:10px "Liberation Serif",serif}`,
  `<svg viewBox="197 142 1704 858" preserveAspectRatio="xMidYMid meet" role="img" aria-label="zpt">
    <defs>
      <linearGradient id="tube"><stop offset="0" stop-color="#8f7768"/><stop offset=".5" stop-color="#b8a294"/><stop offset="1" stop-color="#9a8273"/></linearGradient>
      <linearGradient id="tubeHi" x2="1" y2=".5"><stop offset="0" stop-color="#a08878"/><stop offset=".45" stop-color="#f4ece6"/><stop offset="1" stop-color="#8f7768"/></linearGradient>
      <linearGradient id="cyl"><stop offset="0" stop-color="#8e94a8"/><stop offset=".5" stop-color="#d4d8e8"/><stop offset="1" stop-color="#8e94a8"/></linearGradient>
      <linearGradient id="disc" x2="1" y2="1"><stop offset="0" stop-color="#0a7fbe"/><stop offset=".5" stop-color="#23a6ec"/><stop offset="1" stop-color="#0678b4"/></linearGradient>
      <filter id="soft" x="-20%" y="-20%" width="140%" height="140%"><feGaussianBlur stdDeviation="5"/></filter>
    </defs>
    <polygon filter="url(#soft)" fill="#1c1c1c" opacity=".88" points="813,326 803,362 795,368 781,342 768,364 764,388 750,404 740,382 730,414 712,426 722,446 702,440 710,466 712,478 696,510 722,502 726,530 722,570 718,620 716,674 733,640 742,560 760,470 770,440 812,430 822,372 812,380 818,345"/>
    <g stroke="#0a0a14" stroke-width="3" stroke-linejoin="round" transform="translate(690 320) scale(.33333)">${left}</g>
    <g stroke="#0a0a14" stroke-width="3" stroke-linejoin="round" transform="translate(980 400) scale(.33333)">${right}</g>
    <g fill="none" stroke-width="3"><path d="M239 942l18 3" stroke="#1b7a24" stroke-width="4"/><path d="M255 941l10 5-10 4z" fill="#2c9a34" stroke="none"/>
    <path d="M238 942v20" stroke="#c01818" stroke-width="4"/><path d="M234 959h9l-4 10z" fill="#8e1c1c" stroke="none"/>
    <path d="M239 941l-12 9" stroke="#16169a"/><path d="M223 955l4-8 6 4-4 5z" fill="#2222d0" stroke="#16169a" stroke-width="1"/></g>
    <text x="263" y="952" fill="#0a8a1a">Y</text><text x="235" y="977" fill="#f00">X</text><text x="219" y="961" fill="#00f">Z</text>
  </svg>`);

/* ---------- viewport ---------- */
define('sw-viewport', `
  :host{position:relative;display:flex;flex-direction:column;flex:1;min-width:0;
    background:
      radial-gradient(34% 50% at 78% 24%,#dbdeea 0,#dcdfeacc 35%,#dee1eb00 100%),
      radial-gradient(60% 30% at 70% 42%,#dde0ea 0,#dde0eaaa 40%,#dde0ea00 100%),
      radial-gradient(30% 30% at 100% 100%,#eff0f4,#eff0f400),
      linear-gradient(#fff 0,#fefeff 28%,#f2f3f7 42%,#e5e7ee 52%,#e3e4eb 57%,#f0f0f4 63%,#fbfbfc 69%,#fff 74%,#fdfdfd 86%,#f5f6fa 100%)}
  .bar{display:grid;grid-template-columns:1fr auto 1fr;align-items:center;height:28px;padding:3px 0 5px;color:#888}
  .hud,.win{display:flex;align-items:center}
  .hud{grid-column:2;gap:7px}
  .win{justify-self:end;gap:7px}
  .pane{position:absolute;right:0;top:59px;width:13px;border:solid #222;border-width:1px 0 1px 1px;overflow:hidden}
  .pane button{width:24px;height:24px;justify-content:flex-start;padding-left:4px;background:#abadb1;border-bottom:2px solid #222;border-left:1px solid #eee}
  .pane button:first-child{background:#eef0f4}
  .pane button:last-child{border-bottom:0}`,
  `<div class="bar"><div class="hud">${btn('fit', '整屏显示全图')}${btn('area', '局部放大')}${btn('previous', '上一视图')}${btn('cut', '剖面视图')}${btn('dynamic', '动态注解视图')}${btn('orient', '视图定向')}${btn('caret', '视图定向选项', 'drop')}${btn('cube', '显示样式')}${btn('caret', '显示样式选项', 'drop')}${btn('glasses', '隐藏项目')}${btn('caret', '隐藏项目选项', 'drop')}${btn('ball', '编辑外观')}${btn('scene', '应用布景')}${btn('caret', '布景选项', 'drop')}${btn('monitor', '视图设定')}${btn('caret', '视图设定选项', 'drop')}</div>
   <div class="win">${btn('paneL', '左窗格')}${btn('paneR', '右窗格')}${btn('min', '最小化')}${btn('cascade', '还原')}${btn('close', '关闭')}</div></div>
   <sw-model></sw-model>
   <div class="pane">${btn('home', '资源')}${btn('library', '设计库')}${btn('folder', '文件探索器')}${btn('palette', '视图调色板')}${btn('globe', '外观')}${btn('props', '自定义属性')}</div>`);

/* ---------- bottom ---------- */
define('sw-sheets', `
  :host{display:flex;flex:none;height:16px;background:#e2e5ea;border-top:1px solid #111;border-bottom:1px solid #111;padding-left:2px}
  button{height:14px;line-height:14px;background:#a9abaf;border:solid #111;border-width:0 2px 1px 0;padding:0 5px}
  .nav{display:flex;margin-right:1px}
  .nav button{width:16px;padding:0;border:1px solid #999;background:#b8babd}
  .on{background:#e2e5ea;padding:0 9px;border-left:2px solid #111}`,
  `<div class="nav">${[['第一页', 'M2 0v8M9 0v8L4 4z'], ['上一页', 'M8 0v8L3 4z'], ['下一页', 'M3 0v8l5-4z'], ['最后页', 'M2 0v8l5-4zM9 0v8']].map(([l, q]) => `<button aria-label="${l}"><svg width="11" height="8"><path d="${q}" fill="#8a8c90" stroke="#8a8c90"/></svg></button>`).join('')}</div>
   <button class="on">模型</button><button>3D 视图</button><button>运动算例 1</button>`);
define('sw-status', `
  :host{display:flex;flex:none;align-items:center;height:19px;background:#d6dade;border-bottom:1px solid #999;padding:0 13px 0 2px}
  .s{margin-left:auto}
  .e{margin-left:18px}
  .unit{display:flex;align-items:center;margin:0 17px 0 49px;gap:16px}
  .unit sw-icon{transform:rotate(180deg)}
  .tag{margin-left:57px}`,
  `<span>SOLIDWORKS Premium 2015 x64 版</span><span class="s">完全定义</span><span class="e">在编辑 装配体</span><button class="unit">MMGS${ic('caret')}</button>${btn('question', '帮助')}${btn('tag', '标签', 'tag')}`);

define('sw-app', `
  :host{display:flex;flex-direction:column;height:100vh;padding:6px 0 1px 7px;border-left:1px solid #777;border-top:1px solid #666;border-top-left-radius:6px;background:linear-gradient(#e2fcff,#e2fcff) 0 0/100% 6px no-repeat #fff}
  .work{display:flex;flex:1;min-height:0}`,
  `<sw-titlebar></sw-titlebar><sw-ribbon></sw-ribbon><div class="work"><sw-panel></sw-panel><sw-viewport></sw-viewport></div><sw-sheets></sw-sheets><sw-status></sw-status>`);
</script>
</body>
</html>
